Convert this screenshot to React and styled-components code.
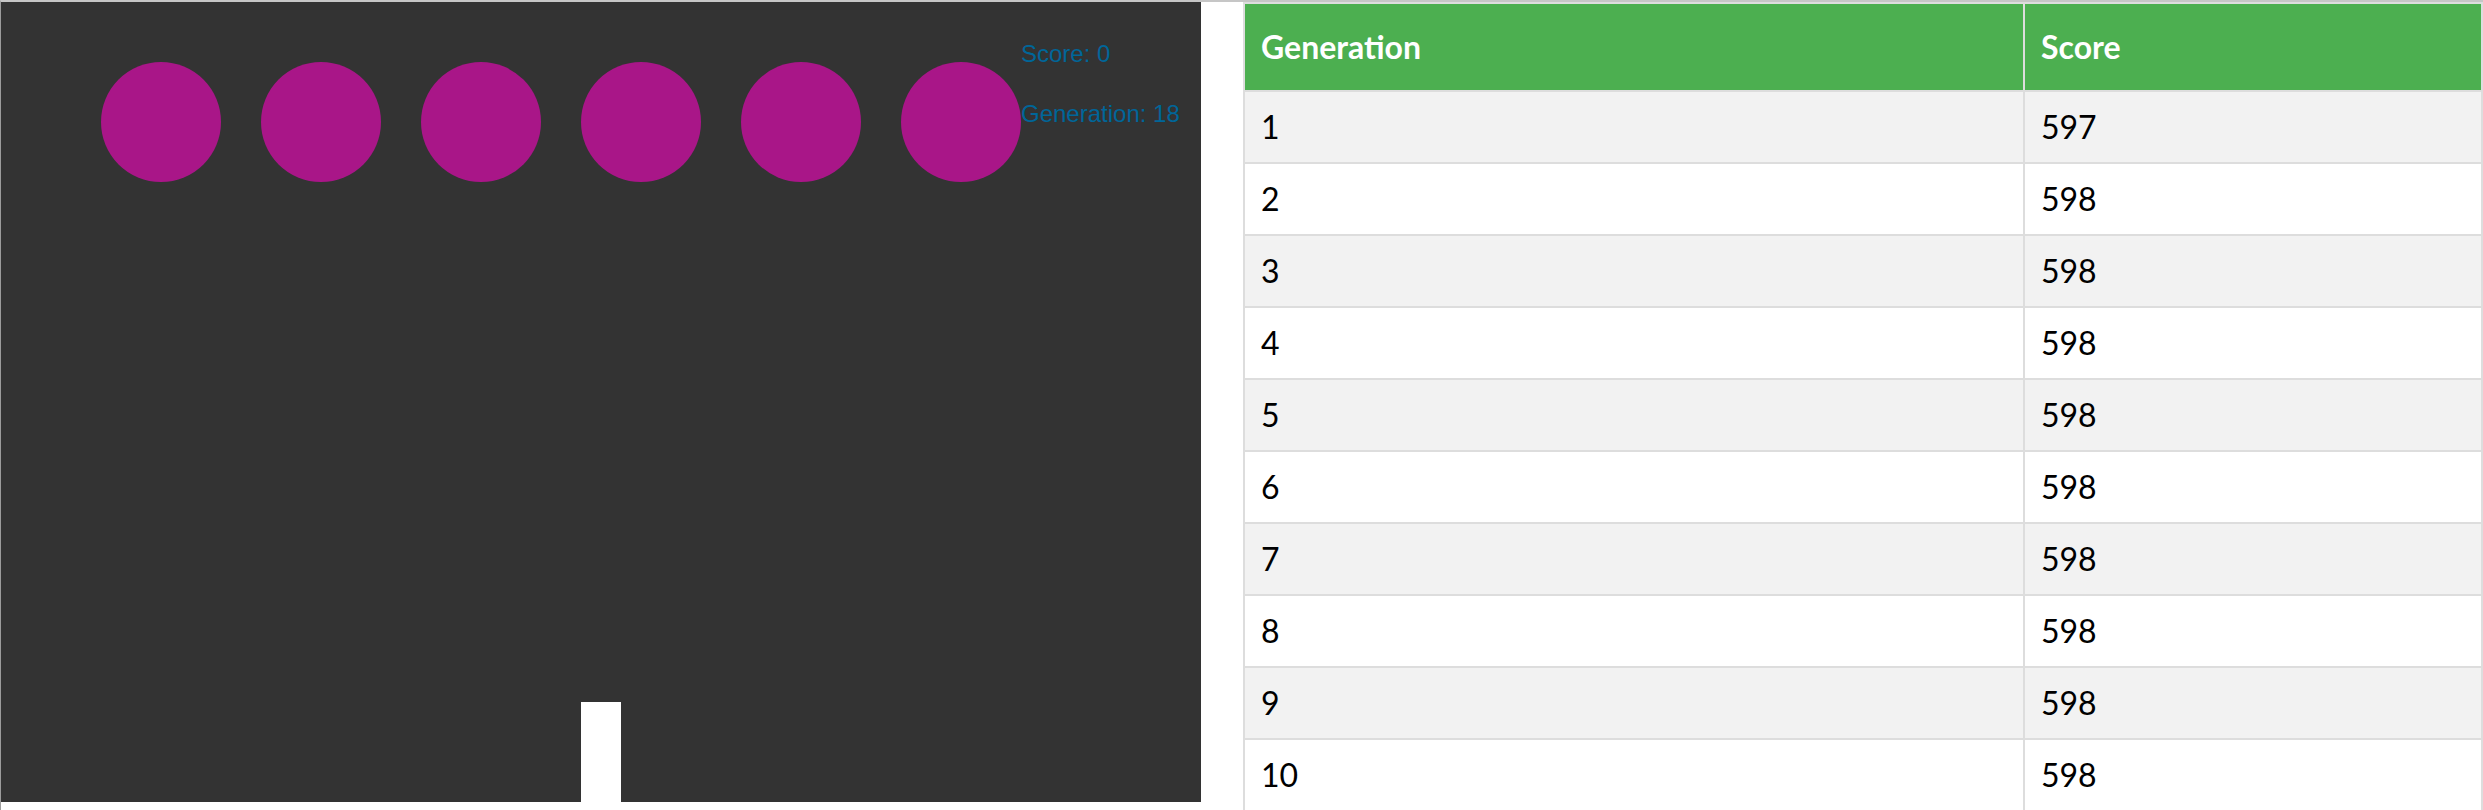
import React from "react";
import styled, { createGlobalStyle } from "styled-components";

const GlobalStyle = createGlobalStyle`
  html, body {
    margin: 0;
    padding: 0;
    background: #ffffff;
  }
  body {
    font-family: "Liberation Sans", Arial, sans-serif;
  }
`;

const results = [597, 598, 598, 598, 598, 598, 598, 598, 598, 598];
const balls = [0, 1, 2, 3, 4, 5];

export default function App() {
  return (
    <>
      <GlobalStyle />
      <Page>
        <Game>
          <svg width="1200" height="800" viewBox="0 0 1200 800">
            <rect x="0" y="0" width="1200" height="800" fill="#333333" />
            {balls.map((i) => (
              <circle key={i} cx={160 + i * 160} cy="120" r="60" fill="#a91688" />
            ))}
            <rect x="580" y="700" width="40" height="100" fill="#ffffff" />
            <text x="1020" y="60" fill="#006699" fontSize="24" fontFamily="Liberation Sans, Arial, sans-serif">
              Score: 0
            </text>
            <text x="1020" y="120" fill="#006699" fontSize="24" fontFamily="Liberation Sans, Arial, sans-serif">
              Generation: 18
            </text>
          </svg>
        </Game>
        <Results>
          <colgroup>
            <col style={{ width: "780px" }} />
            <col />
          </colgroup>
          <thead>
            <tr>
              <Head>Generation</Head>
              <Head>Score</Head>
            </tr>
          </thead>
          <tbody>
            {results.map((score, i) => (
              <Row key={i} $odd={i % 2 === 0}>
                <Cell>{i + 1}</Cell>
                <Cell>{score}</Cell>
              </Row>
            ))}
          </tbody>
        </Results>
      </Page>
    </>
  );
}

const Page = styled.div`
  display: flex;
  align-items: flex-start;
  gap: 42px;
  border-top: 2px solid #c6c6c6;
  border-left: 1px solid #9c9c9c;
  min-height: 808px;
`;

const Game = styled.div`
  width: 1200px;
  height: 800px;
  flex-shrink: 0;
  svg {
    display: block;
  }
`;

const Results = styled.table`
  flex: 1;
  border-collapse: collapse;
  table-layout: fixed;
  font-family: Lato, "Open Sans", sans-serif;
  font-size: 32px;
  line-height: 38px;
  color: #000;
`;

const Head = styled.th`
  background: #4caf50;
  color: #ffffff;
  font-weight: bold;
  text-align: left;
  padding: 24px 16px;
  border: 2px solid #dddddd;
`;

const Row = styled.tr`
  background: ${(p) => (p.$odd ? "#f2f2f2" : "#ffffff")};
`;

const Cell = styled.td`
  padding: 16px;
  border: 2px solid #dddddd;
`;
